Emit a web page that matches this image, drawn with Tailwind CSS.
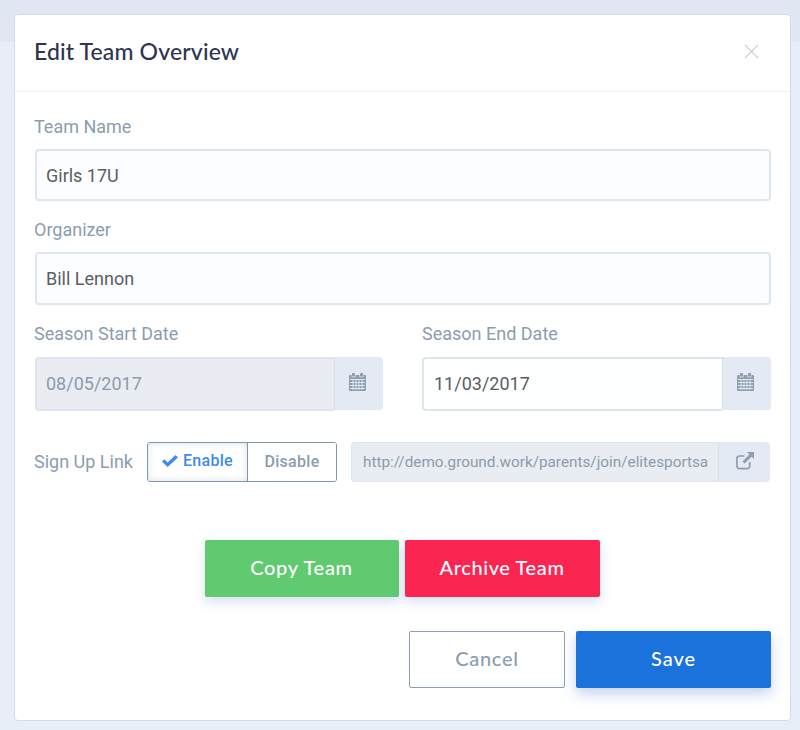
<!DOCTYPE html>
<html>
<head>
<meta charset="utf-8">
<title>Edit Team Overview</title>
<script src="https://cdn.jsdelivr.net/npm/@tailwindcss/browser@4"></script>
</head>
<body class="m-0 h-[730px] w-[800px] overflow-hidden bg-[linear-gradient(to_bottom,#e0e7f2_0,#e0e7f2_42px,#e8eef7_42px)] font-['Roboto',sans-serif]">

<div class="ml-[14px] mt-[14px] h-[707px] w-[777px] rounded-[4px] border border-[#d3dde9] bg-white">

  <!-- header -->
  <div class="flex h-[77px] items-center justify-between border-b border-[#eef1f5] pb-[4px] pl-[19px] pr-[31px]">
    <h1 class="font-['Lato',sans-serif] text-[23px] font-medium tracking-[0.15px] text-[#2d3550]">Edit Team Overview</h1>
    <svg class="h-[15px] w-[15px]" viewBox="0 0 16 16" fill="none" stroke="#c6c9cf" stroke-width="1.2"><path d="M1 1l14 14M15 1L1 15"/></svg>
  </div>

  <!-- form -->
  <div class="pl-[19px] pr-[20px]">
    <label class="mt-[24px] block text-[18px] leading-[22px] text-[#8c9cb0]">Team Name</label>
    <input class="ml-[1px] mt-[11px] block h-[52px] w-[736px] rounded-[4px] border-2 border-[#dfe6f0] bg-[#fcfdff] px-[9px] text-[18px] text-[#5a5d63] outline-none" value="Girls 17U">

    <label class="mt-[18px] block text-[18px] leading-[22px] text-[#8c9cb0]">Organizer</label>
    <input class="ml-[1px] mt-[11px] block h-[53px] w-[736px] rounded-[4px] border-2 border-[#dfe6f0] bg-[#fcfdff] px-[9px] text-[18px] text-[#5a5d63] outline-none" value="Bill Lennon">

    <div class="mt-[18px] flex gap-[39px]">
      <div class="w-[349px]">
        <label class="block text-[18px] leading-[22px] text-[#8c9cb0]">Season Start Date</label>
        <div class="ml-[1px] mt-[12px] flex">
          <input class="block h-[54px] w-[299px] rounded-l-[4px] border-2 border-r-0 border-[#dfe5ee] bg-[#e9edf3] px-[9px] pb-[2px] text-[18px] text-[#8e9aab] outline-none" value="08/05/2017" disabled>
          <div class="flex h-[53px] w-[49px] items-center justify-center rounded-r-[4px] border-l border-[#d9e0ea] bg-[#e4eaf3] pb-[4px] pr-[4px]">
            <svg class="h-[18px] w-[17px]" viewBox="0 0 17 18"><path fill="#8f9db0" d="M3 0h2a1 1 0 0 1 1 1v2.5H3.5L3 3zM11 1a1 1 0 0 1 1-1h2v3.5h-3zM1 2h1.6v2.2h4V2h3.8v2.2h4V2H16a1 1 0 0 1 1 1v14a1 1 0 0 1-1 1H1a1 1 0 0 1-1-1V3a1 1 0 0 1 1-1z"/><path stroke="#e4eaf3" stroke-width=".9" fill="none" d="M1 6.5h15M1 9.5h15M1 12.5h15M1 15.5h15M4 6v11M7 6v11M10 6v11M13 6v11"/></svg>
          </div>
        </div>
      </div>
      <div class="w-[349px]">
        <label class="block text-[18px] leading-[22px] text-[#8c9cb0]">Season End Date</label>
        <div class="mt-[12px] flex">
          <input class="block h-[54px] w-[300px] rounded-l-[4px] border-2 border-r-0 border-[#dfe6f0] bg-[#fdfeff] px-[10px] pb-[2px] text-[18px] text-[#5a5d63] outline-none" value="11/03/2017">
          <div class="flex h-[53px] w-[49px] items-center justify-center rounded-r-[4px] border-l border-[#d9e0ea] bg-[#e4eaf3] pb-[4px] pr-[4px]">
            <svg class="h-[18px] w-[17px]" viewBox="0 0 17 18"><path fill="#8f9db0" d="M3 0h2a1 1 0 0 1 1 1v2.5H3.5L3 3zM11 1a1 1 0 0 1 1-1h2v3.5h-3zM1 2h1.6v2.2h4V2h3.8v2.2h4V2H16a1 1 0 0 1 1 1v14a1 1 0 0 1-1 1H1a1 1 0 0 1-1-1V3a1 1 0 0 1 1-1z"/><path stroke="#e4eaf3" stroke-width=".9" fill="none" d="M1 6.5h15M1 9.5h15M1 12.5h15M1 15.5h15M4 6v11M7 6v11M10 6v11M13 6v11"/></svg>
          </div>
        </div>
      </div>
    </div>

    <!-- sign up link -->
    <div class="mt-[31px] flex items-center">
      <span class="w-[113px] pb-[2px] text-[18px] text-[#8c9cb0]">Sign Up Link</span>
      <div class="flex h-[40px] w-[190px] overflow-hidden rounded-[3px] border border-[#8396ad] text-[16px] font-medium tracking-[0.3px]">
        <button class="flex w-[100px] items-center justify-center gap-[5px] border-r border-[#8396ad] bg-white pb-[2px] text-[#3d8bef] shadow-[inset_0_0_6px_rgba(140,156,176,0.35)]">
          <svg class="h-[12px] w-[16px]" viewBox="0 0 16 12"><path fill="#3d8bef" d="M0 6.5 2.3 4.2l3.3 3.3L13.5 0 16 2.4 5.6 12z"/></svg>
          Enable
        </button>
        <button class="flex-1 bg-white text-[#8c9cb0]">Disable</button>
      </div>
      <div class="ml-[14px] flex h-[40px] w-[419px]">
        <input class="block h-[40px] w-[367px] rounded-l-[4px] border border-r-0 border-[#e0e6ef] bg-[#e9edf3] pl-[11px] pr-[10px] text-[15.3px] text-[#8e9aab] outline-none" value="http://demo.ground.work/parents/join/elitesportsacademy" disabled>
        <div class="flex h-[40px] w-[52px] items-center justify-center rounded-r-[4px] border-l border-[#d9e0ea] bg-[#e4eaf3] pb-[3px]">
          <svg class="h-[18px] w-[18px]" viewBox="0 0 19 19" fill="none"><path stroke="#8f9db0" stroke-width="1.8" d="M14.5 10.5V15a2.6 2.6 0 0 1-2.6 2.6H3.6A2.6 2.6 0 0 1 1 15V6.8a2.6 2.6 0 0 1 2.6-2.6H9"/><path fill="#8f9db0" d="M11.5 0H19v7.5l-2.6-2.6-7.3 7.3-2.3-2.3 7.3-7.3z"/></svg>
        </div>
      </div>
    </div>

    <!-- team actions -->
    <div class="mt-[58px] flex justify-center gap-[6px]">
      <button class="h-[57px] w-[194px] rounded-[2px] bg-[#5fca70] pb-[3px] font-['Lato',sans-serif] text-[20px] font-medium tracking-[0.7px] text-white shadow-[0_5px_12px_rgba(120,150,210,0.3)]">Copy Team</button>
      <button class="h-[57px] w-[195px] rounded-[2px] bg-[#fb2552] pb-[3px] font-['Lato',sans-serif] text-[20px] font-medium tracking-[0.6px] text-white shadow-[0_5px_12px_rgba(120,150,210,0.3)]">Archive Team</button>
    </div>

    <!-- footer -->
    <div class="-mr-[1px] mt-[34px] flex justify-end gap-[11px]">
      <button class="h-[57px] w-[156px] rounded-[2px] border border-[#8c9fb5] bg-white pb-[3px] font-['Lato',sans-serif] text-[20px] font-medium tracking-[0.7px] text-[#8c9cb0]">Cancel</button>
      <button class="h-[57px] w-[195px] rounded-[2px] bg-[#1b72dc] pb-[3px] font-['Lato',sans-serif] text-[20px] font-medium tracking-[0.9px] text-white shadow-[0_6px_14px_rgba(90,130,210,0.35)]">Save</button>
    </div>
  </div>
</div>

</body>
</html>
